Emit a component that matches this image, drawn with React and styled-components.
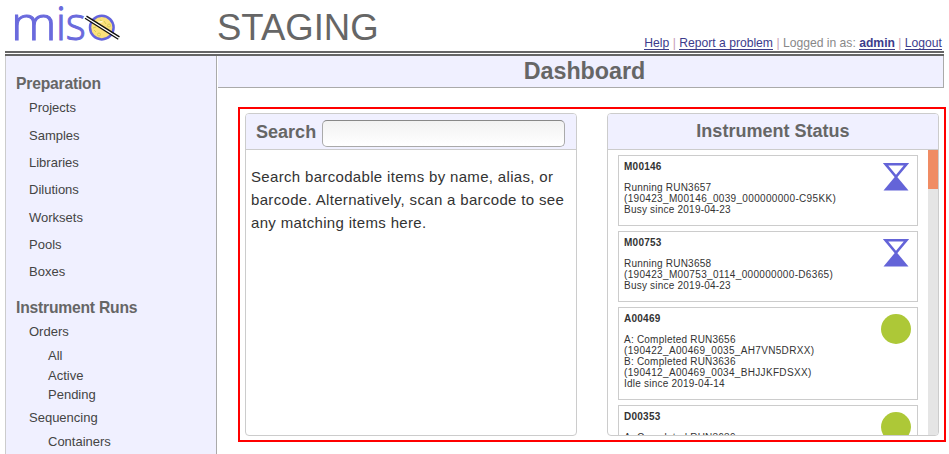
import React from "react";
import styled, { createGlobalStyle } from "styled-components";

const GlobalStyle = createGlobalStyle`
  * { box-sizing: border-box; }
  body {
    margin: 0;
    background: #fff;
    color: #333;
    font-family: "Liberation Sans", Arial, sans-serif;
    overflow: hidden;
  }
`;

const Page = styled.div`
  width: 949px;
  height: 454px;
  padding-left: 5px;
  overflow: hidden;
`;

const Header = styled.header`
  display: flex;
  width: 939px;
  height: 51px;
`;

const Logo = styled.svg`
  flex: none;
  width: 213px;
  height: 51px;
  overflow: visible;
`;

const SiteName = styled.div`
  flex: 1;
  margin-left: -1px;
  font-size: 36.5px;
  line-height: 55px;
  color: #666;
`;

const UserLinks = styled.nav`
  align-self: flex-end;
  padding-right: 2px;
  font-size: 12.15px;
  line-height: 16px;
  white-space: pre;
  color: #888;
`;

const Link = styled.a`
  color: #3c3c8c;
  font-weight: ${(p) => (p.$bold ? 700 : 400)};
  border-bottom: 1px solid #3c3c8c;
  line-height: 12px;
  display: inline-block;
`;

const Divider = styled.span`
  color: #c79db5;
`;

const DoubleRule = styled.div`
  width: 939px;
  height: 5px;
  border-top: 2px solid #666;
  border-bottom: 2px solid #666;
`;

const Columns = styled.div`
  display: flex;
  gap: 1px;
  height: 398px;
`;

const Sidebar = styled.aside`
  width: 212px;
  padding-top: 18px;
  background: #f0f0ff;
  border-left: 1px solid #ccc;
  border-right: 1px solid #aaa;
  overflow: hidden;
`;

const SectionTitle = styled.h2`
  margin: ${(p) => (p.$spaced ? "12.6px" : "0")} 0 0 10px;
  font-size: 15.7px;
  line-height: 20px;
  letter-spacing: -0.22px;
  color: #666;
`;

const MenuItem = styled.div`
  height: ${(p) => p.$height || 27.35}px;
  padding-left: ${(p) => (p.$nested ? 42 : 23)}px;
  font-size: 13px;
  line-height: 27px;
  color: #444;
`;

const MainMenu = styled.div`
  padding-top: 0.4px;
`;

const SubMenu = styled.div`
  padding: 2px 0 0;
  ${MenuItem} {
    line-height: 20px;
  }
`;

const Main = styled.main`
  width: 731px;
`;

const TitleBar = styled.h1`
  width: 726px;
  height: 32px;
  margin: 0 0 19px;
  background: #f0f0ff;
  border-right: 1px solid #aaa;
  border-bottom: 1px solid #aaa;
  font-size: 23.3px;
  line-height: 30px;
  text-align: center;
  text-indent: 8px;
  color: #666;
`;

const Highlight = styled.div`
  display: flex;
  gap: 30px;
  width: 708px;
  height: 335px;
  margin-left: 20px;
  padding: 4px 5px;
  border: 2px solid #f00;
`;

const Panel = styled.section`
  display: flex;
  flex-direction: column;
  width: 332px;
  height: 323px;
  border: 1px solid #ccc;
  border-radius: 4px;
  overflow: hidden;
`;

const PanelHeader = styled.div`
  display: flex;
  flex: none;
  align-items: center;
  justify-content: ${(p) => (p.$center ? "center" : "flex-start")};
  gap: 6px;
  height: 36px;
  padding: 0 0 ${(p) => (p.$center ? 2 : 0)}px ${(p) => (p.$center ? 0 : 10)}px;
  background: #f0f0ff;
  border-bottom: 1px solid #ccc;
`;

const PanelTitle = styled.h3`
  margin: 0;
  font-size: 18.05px;
  line-height: 34px;
  color: #666;
`;

const SearchInput = styled.input`
  width: 243px;
  height: 27px;
  margin-top: 3px;
  border: 1px solid #aaa;
  border-top-color: #888;
  border-radius: 5px;
  background: linear-gradient(#f2f2f2, #fff);
  outline: none;
`;

const SearchHint = styled.p`
  margin: 0;
  padding: 15px 5px;
  font-size: 15px;
  line-height: 23px;
  letter-spacing: 0.33px;
  white-space: nowrap;
`;

const ScrollArea = styled.div`
  display: flex;
  flex: 1;
  justify-content: space-between;
  min-height: 0;
`;

const InstrumentList = styled.div`
  display: flex;
  flex-direction: column;
  gap: 5px;
  padding: 5px 0 0 10px;
  overflow: hidden;
`;

const InstrumentCard = styled.article`
  display: flex;
  flex: none;
  justify-content: space-between;
  width: 300px;
  height: ${(p) => p.$height}px;
  padding: 5px 6px 0 5px;
  border: 1px solid #ccc;
  font-size: 10px;
  line-height: 11px;
`;

const InstrumentName = styled.strong`
  display: block;
  margin-bottom: 10px;
  letter-spacing: 0.25px;
`;

const StatusLine = styled.div`
  letter-spacing: ${(p) => (p.$runName ? 0.33 : 0.22)}px;
`;

const StatusIcon = styled.svg`
  width: 30px;
  height: 30px;
  margin-top: 1px;
`;

const ScrollTrack = styled.div`
  width: 10px;
  background: #e5e5e5;
`;

const ScrollThumb = styled.div`
  height: 39px;
  background: #f08c64;
`;

const preparation = ["Projects", "Samples", "Libraries", "Dilutions", "Worksets", "Pools", "Boxes"];

const instruments = [
  { name: "M00146", busy: true, height: 71, lines: ["Running RUN3657", "(190423_M00146_0039_000000000-C95KK)", "Busy since 2019-04-23"] },
  { name: "M00753", busy: true, height: 71, lines: ["Running RUN3658", "(190423_M00753_0114_000000000-D6365)", "Busy since 2019-04-23"] },
  { name: "A00469", height: 93, lines: ["A: Completed RUN3656", "(190422_A00469_0035_AH7VN5DRXX)", "B: Completed RUN3636", "(190412_A00469_0034_BHJJKFDSXX)", "Idle since 2019-04-14"] },
  { name: "D00353", height: 93, lines: ["A: Completed RUN3639"] },
];

function MisoLogo() {
  return (
    <Logo viewBox="5 0 213 51" role="img" aria-label="miso">
      <g fontFamily="Open Sans" fontWeight="300" fontSize="46" fill="#6a6add" stroke="#6a6add" strokeWidth="1">
        <text x="11" y="40" textLength="45.500" lengthAdjust="spacingAndGlyphs">m</text>
        <text x="55.700" y="40">i</text>
        <text x="65.800" y="40" textLength="20" lengthAdjust="spacingAndGlyphs">s</text>
      </g>
      <circle cx="101.8" cy="27.600" r="11.800" fill="#fbe17c" stroke="#6464dc" strokeWidth="2.500" />
      <g fill="none" stroke="#d5cf55" strokeWidth="1">
        <circle cx="99" cy="34.5" r="1.5" />
        <circle cx="109" cy="25.5" r="1.5" />
        <path d="M93 28l3-1M96 32l-2-2M104 21l2 3M100 20l2 1" />
      </g>
      <path d="M97.500 22.500l5-1" stroke="#fff8d4" strokeWidth="1.500" />
      <path d="M85.800 17.300L118.800 38.100" stroke="#fff" strokeWidth="1.600" />
      <path d="M85 18.300L118.300 39.300M86.500 16.100L119.500 36.900" stroke="#111" strokeWidth="1.350" />
    </Logo>
  );
}

function Status({ busy }) {
  return (
    <StatusIcon viewBox="0 0 30 30">
      {busy ? (
        <>
          <path d="M4.600 2.300H25.400L15 14.800Z" fill="none" stroke="#6464d8" strokeWidth="2.600" />
          <path d="M15 13.500L27.500 28.500H2.500Z" fill="#6464d8" />
        </>
      ) : (
        <circle cx="15" cy="15" r="15" fill="#adc837" />
      )}
    </StatusIcon>
  );
}

export default function App() {
  return (
    <Page>
      <GlobalStyle />
      <Header>
        <MisoLogo />
        <SiteName>STAGING</SiteName>
        <UserLinks>
          <Link>Help</Link> <Divider>|</Divider> <Link>Report a problem</Link> <Divider>|</Divider> Logged in as: <Link $bold>admin</Link> <Divider>|</Divider> <Link>Logout</Link>
        </UserLinks>
      </Header>
      <DoubleRule />
      <Columns>
        <Sidebar>
          <SectionTitle>Preparation</SectionTitle>
          <MainMenu>
            {preparation.map((name) => (
              <MenuItem key={name}>{name}</MenuItem>
            ))}
          </MainMenu>
          <SectionTitle $spaced>Instrument Runs</SectionTitle>
          <MenuItem $height={26}>Orders</MenuItem>
          <SubMenu>
            {["All", "Active", "Pending"].map((name) => (
              <MenuItem key={name} $nested $height={19.3}>{name}</MenuItem>
            ))}
          </SubMenu>
          <MenuItem $height={26}>Sequencing</MenuItem>
          <SubMenu>
            <MenuItem $nested $height={19.5}>Containers</MenuItem>
          </SubMenu>
        </Sidebar>
        <Main>
          <TitleBar>Dashboard</TitleBar>
          <Highlight>
            <Panel>
              <PanelHeader>
                <PanelTitle>Search</PanelTitle>
                <SearchInput aria-label="Search" />
              </PanelHeader>
              <SearchHint>
                Search barcodable items by name, alias, or<br />
                barcode. Alternatively, scan a barcode to see<br />
                any matching items here.
              </SearchHint>
            </Panel>
            <Panel>
              <PanelHeader $center>
                <PanelTitle>Instrument Status</PanelTitle>
              </PanelHeader>
              <ScrollArea>
                <InstrumentList>
                  {instruments.map((item) => (
                    <InstrumentCard key={item.name} $height={item.height}>
                      <div>
                        <InstrumentName>{item.name}</InstrumentName>
                        {item.lines.map((line) => (
                          <StatusLine key={line} $runName={line.startsWith("(")}>{line}</StatusLine>
                        ))}
                      </div>
                      <Status busy={item.busy} />
                    </InstrumentCard>
                  ))}
                </InstrumentList>
                <ScrollTrack>
                  <ScrollThumb />
                </ScrollTrack>
              </ScrollArea>
            </Panel>
          </Highlight>
        </Main>
      </Columns>
    </Page>
  );
}
